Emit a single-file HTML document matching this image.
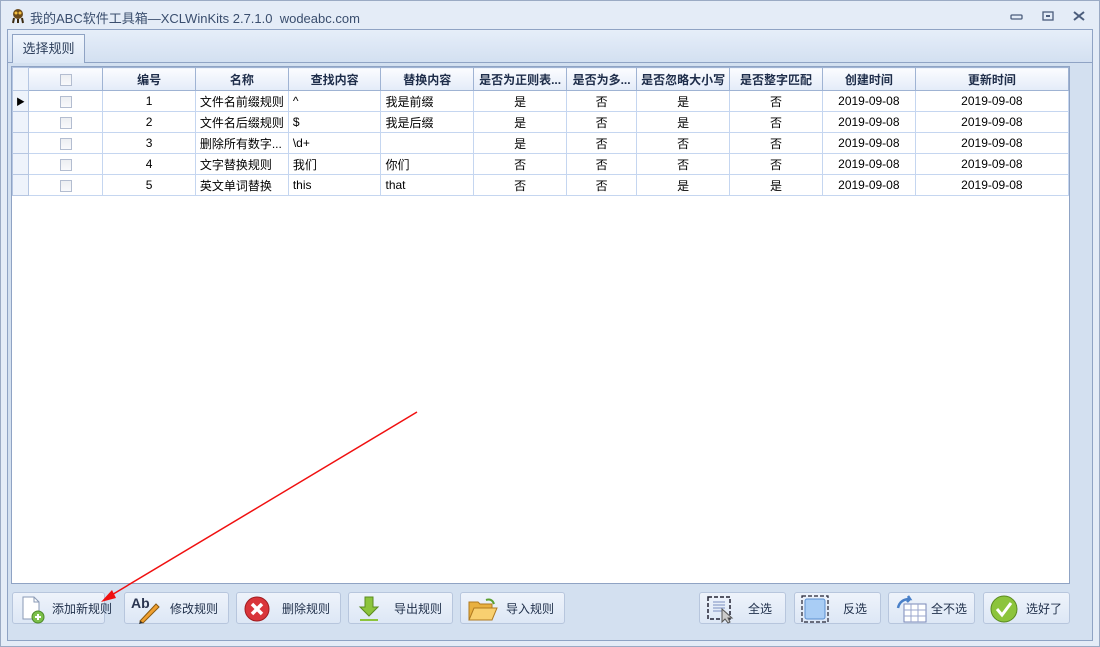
<!DOCTYPE html>
<html><head><meta charset="utf-8"><style>
*{margin:0;padding:0;box-sizing:border-box}
body{width:1100px;height:647px;overflow:hidden;background:#dfe8f5;font-family:"Liberation Sans","Noto Sans CJK SC",sans-serif;font-size:12px;color:#000;position:relative}
.frame{position:absolute;left:0;top:0;width:1100px;height:647px;border:1px solid #9aaac4;background:#e4ecf7}
.title{position:absolute;left:30px;top:8px;font-size:13px;color:#3a4e6e}
.panel{position:absolute;left:7px;top:29px;width:1086px;height:612px;border:1px solid #8fa3c4;background:#d3e0f0}
.tabbar{position:absolute;left:8px;top:30px;width:1084px;height:32px;background:linear-gradient(#e6eef9,#d3e0f1)}
.tab{position:absolute;left:12px;top:34px;width:73px;height:29px;border:1px solid #8fa3c4;border-bottom:none;background:linear-gradient(#f1f6fd,#dce7f5);text-align:center;line-height:27px;font-size:13px;color:#2b3d5a}
.tabline{position:absolute;left:8px;top:62px;width:1084px;height:1px;background:#8fa3c4}
.grid{position:absolute;left:11px;top:66px;width:1059px;height:518px;background:#fff;border:1px solid #8fa3c4;overflow:hidden}
table{border-collapse:collapse;table-layout:fixed}
td,th{height:21px;border:1px solid #c5d6f0;white-space:nowrap;overflow:hidden;padding:0 4px;font-weight:normal;font-size:12px}
th{height:23px;background:linear-gradient(#fbfcff,#e3ebf8);border-color:#9fb3d3;font-weight:bold;color:#1e2d4a;text-align:center}
.c{text-align:center}
.rh{background:#eef3fb;border-color:#b5c6e2;padding:0}
.cb{display:inline-block;width:12px;height:12px;border:1px solid #b3bdd0;background:linear-gradient(#eceef2,#f8f9fb);vertical-align:middle}
.btn{position:absolute;top:592px;height:32px;border:1px solid #b7c6dd;border-radius:3px;background:linear-gradient(#eef3fb,#dde7f5);font-size:12px;color:#1f2f4a;white-space:nowrap}
.btn svg{position:absolute;left:5px;top:1px}
.btn span{position:absolute;top:7px}
.wc{position:absolute;top:10px;color:#4b5d7c}
</style></head><body>
<div class="frame"></div>
<svg style="position:absolute;left:10px;top:8px" width="16" height="16"><circle cx="8" cy="6" r="5" fill="#6b4a1a"/><circle cx="6" cy="5" r="1.5" fill="#f4c040"/><circle cx="10" cy="5" r="1.5" fill="#f4c040"/><path d="M4 10 L3 15 M8 11 L8 15 M12 10 L13 15" stroke="#3a2a10" stroke-width="2"/></svg>
<div class="title">我的ABC软件工具箱—XCLWinKits 2.7.1.0&nbsp; wodeabc.com</div>
<svg class="wc" style="left:1010px;top:14px" width="14" height="6"><rect x="1" y="1" width="11" height="4" rx="1" fill="none" stroke="#4b5d7c" stroke-width="1.3"/></svg>
<svg class="wc" style="left:1042px;top:11px" width="12" height="10"><rect x="1" y="1" width="10" height="8" fill="none" stroke="#4b5d7c" stroke-width="1.3"/><rect x="4" y="4" width="4" height="2" fill="#4b5d7c"/></svg>
<svg class="wc" style="left:1073px;top:11px" width="12" height="10"><path d="M1 1 L11 9 M11 1 L1 9" stroke="#4b5d7c" stroke-width="2"/></svg>
<div class="panel"></div>
<div class="tabbar"></div>
<div class="tabline"></div>
<div class="tab">选择规则</div>
<div class="grid">
<table>
<colgroup><col style="width:16px"><col style="width:75px"><col style="width:93px"><col style="width:93px"><col style="width:93px"><col style="width:93px"><col style="width:93px"><col style="width:70px"><col style="width:92px"><col style="width:93px"><col style="width:93px"><col style="width:154px"></colgroup>
<tr><th class="rh"></th><th><span class="cb"></span></th><th>编号</th><th>名称</th><th>查找内容</th><th>替换内容</th><th>是否为正则表...</th><th>是否为多...</th><th>是否忽略大小写</th><th>是否整字匹配</th><th>创建时间</th><th>更新时间</th></tr>
<tr><td class="rh" style="font-size:9px;text-align:center">▶</td><td class="c"><span class="cb"></span></td><td class="c">1</td><td>文件名前缀规则</td><td>^</td><td>我是前缀</td><td class="c">是</td><td class="c">否</td><td class="c">是</td><td class="c">否</td><td class="c">2019-09-08</td><td class="c">2019-09-08</td></tr>
<tr><td class="rh"></td><td class="c"><span class="cb"></span></td><td class="c">2</td><td>文件名后缀规则</td><td>$</td><td>我是后缀</td><td class="c">是</td><td class="c">否</td><td class="c">是</td><td class="c">否</td><td class="c">2019-09-08</td><td class="c">2019-09-08</td></tr>
<tr><td class="rh"></td><td class="c"><span class="cb"></span></td><td class="c">3</td><td>删除所有数字...</td><td>\d+</td><td></td><td class="c">是</td><td class="c">否</td><td class="c">否</td><td class="c">否</td><td class="c">2019-09-08</td><td class="c">2019-09-08</td></tr>
<tr><td class="rh"></td><td class="c"><span class="cb"></span></td><td class="c">4</td><td>文字替换规则</td><td>我们</td><td>你们</td><td class="c">否</td><td class="c">否</td><td class="c">否</td><td class="c">否</td><td class="c">2019-09-08</td><td class="c">2019-09-08</td></tr>
<tr><td class="rh"></td><td class="c"><span class="cb"></span></td><td class="c">5</td><td>英文单词替换</td><td>this</td><td>that</td><td class="c">否</td><td class="c">否</td><td class="c">是</td><td class="c">是</td><td class="c">2019-09-08</td><td class="c">2019-09-08</td></tr>
</table>
</div>

<div class="btn" style="left:12px;width:93px"><svg width="30" height="30"><path d="M5 3 H16 L21 8 V25 H5 Z" fill="#fff" stroke="#8a9ab5"/><path d="M16 3 V8 H21" fill="none" stroke="#8a9ab5"/><circle cx="20" cy="23" r="6" fill="#7cc04a" stroke="#4d8a2a"/><path d="M17 23 H23 M20 20 V26" stroke="#fff" stroke-width="2"/></svg><span style="left:39px">添加新规则</span></div>
<div class="btn" style="left:124px;width:105px"><svg width="34" height="30"><text x="1" y="14" font-family="Liberation Sans" font-weight="bold" font-size="14" fill="#2a3550">Ab</text><path d="M10 27 L26 10 L29 13 L13 29 Z" fill="#f0a030" stroke="#8a5a10"/><path d="M10 27 L9 30 L13 29" fill="#333"/></svg><span style="left:45px">修改规则</span></div>
<div class="btn" style="left:236px;width:105px"><svg width="30" height="30"><circle cx="15" cy="15" r="12" fill="#d9353a" stroke="#a01c20"/><path d="M10 10 L20 20 M20 10 L10 20" stroke="#fff" stroke-width="3.5"/></svg><span style="left:45px">删除规则</span></div>
<div class="btn" style="left:348px;width:105px"><svg width="30" height="30"><path d="M11 3 H19 V13 H24 L15 22 L6 13 H11 Z" fill="#8cc43c" stroke="#5a8a20"/><rect x="6" y="25" width="18" height="2" fill="#8cc43c"/></svg><span style="left:45px">导出规则</span></div>
<div class="btn" style="left:460px;width:105px"><svg width="34" height="30"><path d="M3 8 H12 L14 10 H26 V26 H3 Z" fill="#e8b040" stroke="#b07a20"/><path d="M3 26 L8 14 H31 L26 26 Z" fill="#f8d070" stroke="#b07a20"/><path d="M20 6 Q26 4 28 10" stroke="#5aa030" stroke-width="2" fill="none"/></svg><span style="left:45px">导入规则</span></div>

<div class="btn" style="left:699px;width:87px"><svg width="34" height="30"><rect x="3" y="3" width="22" height="22" fill="none" stroke="#223" stroke-width="1.5" stroke-dasharray="4 2"/><path d="M8 8 H20 M8 11 H20 M8 14 H20 M8 17 H18" stroke="#7b8fc0"/><path d="M17 15 V28 L20 25 L23 29 L25 28 L23 24 L27 24 Z" fill="#ccc" stroke="#555"/></svg><span style="left:48px">全选</span></div>
<div class="btn" style="left:794px;width:87px"><svg width="30" height="30"><rect x="2" y="2" width="26" height="26" fill="none" stroke="#223" stroke-width="1.2" stroke-dasharray="4 2"/><rect x="5" y="5" width="20" height="20" rx="2" fill="#a9cdf5" stroke="#5a8ed0"/></svg><span style="left:48px">反选</span></div>
<div class="btn" style="left:888px;width:87px"><svg width="34" height="30"><rect x="10" y="10" width="22" height="18" fill="#fff" stroke="#7a88b8"/><path d="M10 16 H32 M10 22 H32 M17 10 V28 M24 10 V28" stroke="#9aa6cc"/><path d="M4 14 Q6 5 16 5 L14 2 M16 5 L13 8" stroke="#4a80c8" stroke-width="2.5" fill="none"/></svg><span style="left:42px">全不选</span></div>
<div class="btn" style="left:983px;width:87px"><svg width="30" height="30"><circle cx="15" cy="15" r="13" fill="#8cc43c" stroke="#5a8a20"/><path d="M8 15 L13 21 L22 9" stroke="#fff" stroke-width="3" fill="none"/></svg><span style="left:42px">选好了</span></div>

<svg style="position:absolute;left:0;top:0" width="1100" height="647"><line x1="417" y1="412" x2="110" y2="596" stroke="#f01010" stroke-width="1.5"/><path d="M101 602 L112 590 L116 598 Z" fill="#f01010"/></svg>
</body></html>
